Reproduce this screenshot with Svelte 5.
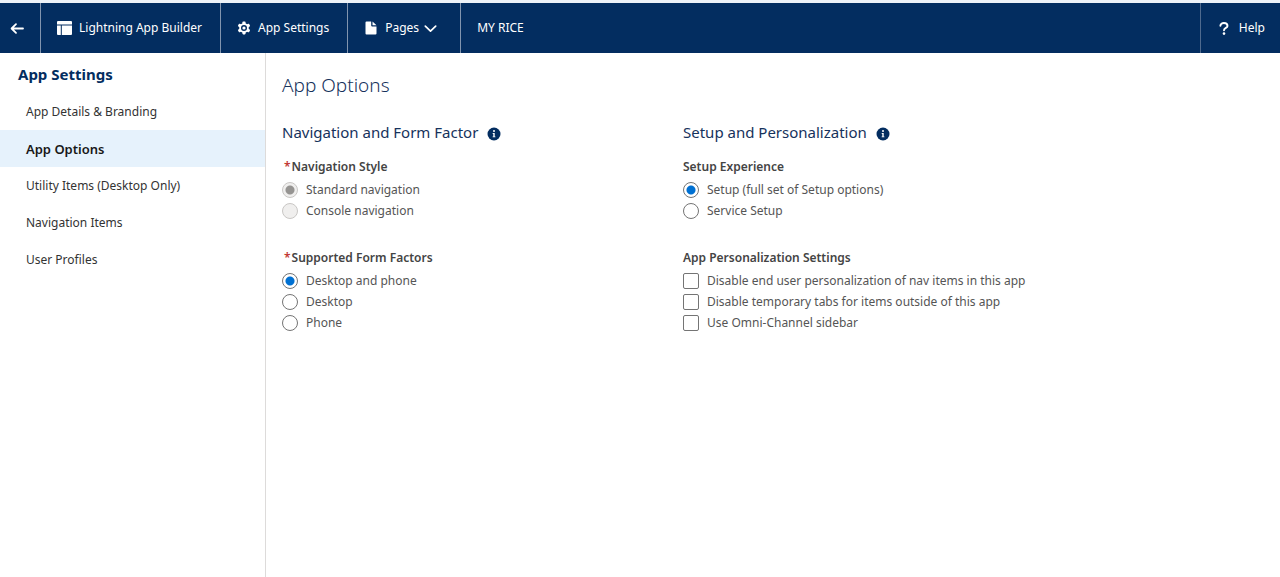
<script>
  const sections = [
    'App Details & Branding',
    'App Options',
    'Utility Items (Desktop Only)',
    'Navigation Items',
    'User Profiles'
  ];
  let current = $state('App Options');

  let navigationStyle = $state('Standard navigation');
  let formFactor = $state('Desktop and phone');
  let setupExperience = $state('Setup (full set of Setup options)');

  const personalization = $state([
    { label: 'Disable end user personalization of nav items in this app', on: false },
    { label: 'Disable temporary tabs for items outside of this app', on: false },
    { label: 'Use Omni-Channel sidebar', on: false }
  ]);
</script>

{#snippet info(label)}
  <button class="info" type="button" aria-label={label}>
    <svg viewBox="0 0 14 14" width="14" height="14" aria-hidden="true">
      <circle cx="7" cy="7" r="6.5" fill="#032d60" />
      <circle cx="7" cy="4" r="1" fill="#fff" />
      <path d="M5.7 6h2v3.4h.7v.9H5.6v-.9h.7V6.9h-.6z" fill="#fff" />
    </svg>
  </button>
{/snippet}

<div class="page">
  <header>
    <a class="cell back" href="#back" aria-label="Back">
      <svg viewBox="0 0 14 14" width="14" height="14" aria-hidden="true">
        <path d="M6 3.2 1.6 7.500 6 11.800M1.800 7.500H13" fill="none" stroke="#fff" stroke-width="1.8" stroke-linecap="round" stroke-linejoin="round" />
      </svg>
    </a>
    <div class="cell builder">
      <svg viewBox="0 0 15 14" width="15" height="14" aria-hidden="true">
        <path d="M1 0h13a1 1 0 0 1 1 1v2.6H0V1a1 1 0 0 1 1-1zM0 4.600h3.800v9.400H1a1 1 0 0 1-1-1zM4.800 4.600H15V13a1 1 0 0 1-1 1H4.800z" fill="#fff" />
      </svg>
      <span>Lightning App Builder</span>
    </div>
    <a class="cell settings" href="#settings">
      <svg viewBox="0 0 14 14" width="14" height="14" aria-hidden="true">
        <g fill="#fff">
          <rect x="5.4" y="0.6" width="3.2" height="12.8" rx="0.8" />
          <rect x="5.4" y="0.6" width="3.2" height="12.8" rx="0.8" transform="rotate(60 7 7)" />
          <rect x="5.4" y="0.6" width="3.2" height="12.8" rx="0.8" transform="rotate(120 7 7)" />
          <circle cx="7" cy="7" r="4.8" />
        </g>
        <circle cx="7" cy="7" r="3" fill="#032d60" />
        <circle cx="7" cy="7" r="1.6" fill="#fff" />
      </svg>
      <span>App Settings</span>
    </a>
    <button class="cell pages" type="button">
      <svg viewBox="0 0 14 14" width="14" height="14" aria-hidden="true">
        <path d="M2.5.5h4.700v4a1 1 0 0 0 1 1h4.300v7a1 1 0 0 1-1 1h-9a1 1 0 0 1-1-1v-11a1 1 0 0 1 1-1zM8.500.500l4 3.800h-4z" fill="#fff" />
      </svg>
      <span>Pages</span>
      <svg class="chevron" viewBox="0 0 13 14" width="13" height="14" aria-hidden="true">
        <path d="m1.300 5.200 5.200 5 5.200-5" fill="none" stroke="#fff" stroke-width="1.700" stroke-linecap="round" stroke-linejoin="round" />
      </svg>
    </button>
    <div class="cell name">MY RICE</div>
    <a class="cell help" href="#help">
      <svg viewBox="0 0 10 14" width="10" height="14" aria-hidden="true">
        <path d="M1.4 4.8C1.4 2.900 3 2 4.900 2s3.600 1 3.600 2.900C8.500 7 5 6.800 5 9.300" fill="none" stroke="#fff" stroke-width="1.900" stroke-linecap="round" />
        <circle cx="5" cy="12.600" r="1.300" fill="#fff" />
      </svg>
      <span>Help</span>
    </a>
  </header>

  <div class="body">
    <nav aria-label="App Settings">
      <h2>App Settings</h2>
      <ul>
        {#each sections as item}
          <li>
            <a href="#section" class:active={item === current} aria-current={item === current ? 'page' : undefined} onclick={() => (current = item)}>{item}</a>
          </li>
        {/each}
      </ul>
    </nav>

    <main>
      <h1>App Options</h1>
      <div class="columns">
        <section>
          <h3>Navigation and Form Factor {@render info('About navigation and form factor')}</h3>
          <fieldset disabled>
            <legend class="required"><abbr>*</abbr>Navigation Style</legend>
            {#each ['Standard navigation', 'Console navigation'] as option}
              <label><input type="radio" name="navigation" value={option} bind:group={navigationStyle} /><span>{option}</span></label>
            {/each}
          </fieldset>
          <fieldset>
            <legend class="required"><abbr>*</abbr>Supported Form Factors</legend>
            {#each ['Desktop and phone', 'Desktop', 'Phone'] as option}
              <label><input type="radio" name="factor" value={option} bind:group={formFactor} /><span>{option}</span></label>
            {/each}
          </fieldset>
        </section>
        <section>
          <h3>Setup and Personalization {@render info('About setup and personalization')}</h3>
          <fieldset>
            <legend>Setup Experience</legend>
            {#each ['Setup (full set of Setup options)', 'Service Setup'] as option}
              <label><input type="radio" name="setup" value={option} bind:group={setupExperience} /><span>{option}</span></label>
            {/each}
          </fieldset>
          <fieldset>
            <legend>App Personalization Settings</legend>
            {#each personalization as option}
              <label><input type="checkbox" bind:checked={option.on} /><span>{option.label}</span></label>
            {/each}
          </fieldset>
        </section>
      </div>
    </main>
  </div>
</div>

<style>
  :global(body) {
    margin: 0;
    background: #fff;
  }
  .page {
    min-height: 100vh;
    box-sizing: border-box;
    display: flex;
    flex-direction: column;
    border-top: 3px solid #edf2f8;
    font-family: 'Noto Sans', 'Open Sans', sans-serif;
    font-size: 12px;
    line-height: 20px;
    color: #444;
  }
  a {
    color: inherit;
    text-decoration: none;
  }
  button {
    margin: 0;
    border: 0;
    background: none;
    color: inherit;
    font: inherit;
    cursor: pointer;
  }
  svg {
    display: block;
    flex: none;
  }
  header {
    display: flex;
    min-height: 50px;
    background: #032d60;
    color: #fff;
  }
  .cell {
    display: flex;
    align-items: center;
    gap: 7px;
    padding: 0 18px 0 16px;
    border-right: 1px solid #8194ae;
    white-space: nowrap;
  }
  .back {
    padding: 0 16px 0 10px;
  }
  .pages {
    padding-right: 23px;
  }
  .chevron {
    margin-left: -2px;
  }
  .name {
    border-right: 0;
  }
  .help {
    margin-left: auto;
    padding: 0 15px 0 18px;
    gap: 10px;
    border-right: 0;
    border-left: 1px solid #4f6a8e;
  }
  .body {
    flex: 1;
    display: flex;
  }
  nav {
    flex: none;
    width: 265px;
    border-right: 1px solid #dddbda;
  }
  h1,
  h2,
  h3 {
    margin: 0;
    color: #16325c;
  }
  h2 {
    padding: 10px 18px 8px;
    font-size: 15px;
    line-height: 22px;
    font-weight: 700;
    color: #032d60;
  }
  ul {
    margin: 0;
    padding: 0;
    list-style: none;
  }
  li a {
    display: block;
    padding: 1px 26px 0;
    line-height: 36px;
    color: #333;
  }
  li a.active {
    background: #e6f2fc;
    color: #181818;
    font-size: 13px;
    font-weight: 600;
  }
  main {
    flex: 1;
    min-width: 0;
    padding: 18px 0 16px 16px;
  }
  h1 {
    font-size: 19px;
    line-height: 28px;
    font-weight: 300;
  }
  .columns {
    display: grid;
    grid-template-columns: 2fr 3fr;
    gap: 3px;
    margin-top: 21px;
  }
  h3 {
    display: flex;
    align-items: center;
    gap: 9px;
    margin-bottom: 13px;
    font-size: 15px;
    line-height: 24px;
    font-weight: 400;
  }
  .info {
    padding: 3px 0 0;
  }
  fieldset {
    min-width: 0;
    margin: 0 0 27px;
    padding: 0;
    border: 0;
  }
  legend {
    margin-bottom: 2px;
    padding: 0;
    font-weight: 600;
  }
  .required {
    padding-left: 2px;
  }
  abbr {
    margin-right: 1px;
    color: #c23934;
  }
  label {
    display: flex;
    align-items: center;
    gap: 8px;
    min-height: 21px;
    color: #555;
  }
  input {
    appearance: none;
    flex: none;
    box-sizing: border-box;
    width: 16px;
    height: 16px;
    margin: 0;
    border: 1px solid #747474;
    border-radius: 2px;
    background: #fff;
  }
  input[type='radio'] {
    border-radius: 50%;
  }
  input[type='radio']:checked {
    background: radial-gradient(circle, #0070d2 4px, #fff 5px);
  }
  input[type='radio']:disabled {
    border-color: #c9c7c5;
    background: #f0efee;
  }
  input[type='radio']:disabled:checked {
    background: radial-gradient(circle, #969492 4px, #f0efee 5px);
  }
  input[type='checkbox']:checked {
    background: #0070d2;
  }
</style>
